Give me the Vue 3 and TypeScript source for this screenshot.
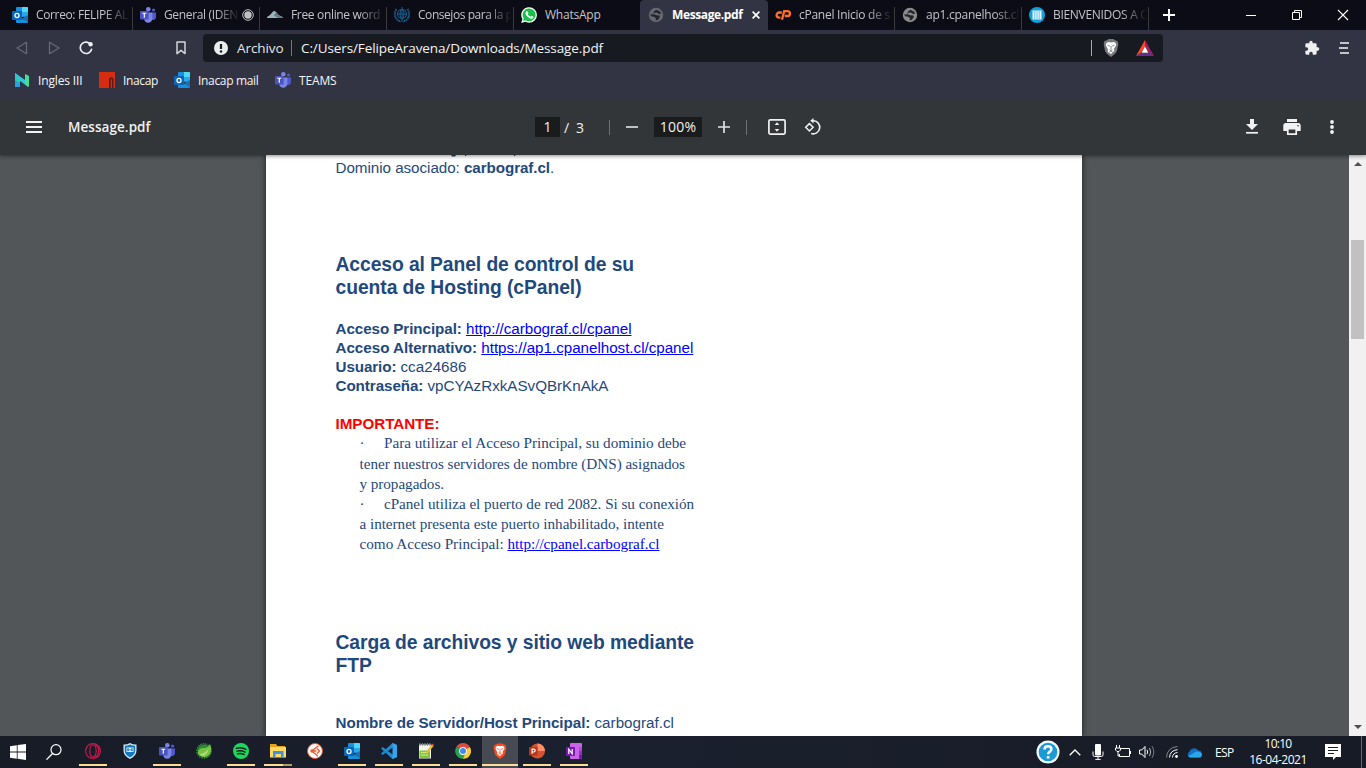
<script setup lang="ts">
interface Run { t: string; w: number; k?: string }
interface Line { cls: string; runs: Run[] }

// Spreads the letters of a run so that its advance equals the given width.
const vFit = {
  mounted(el: HTMLElement, binding: { value: number }) {
    const n = (el.textContent || '').length
    const natural = el.getBoundingClientRect().width
    if (n && binding.value) el.style.letterSpacing = (binding.value - natural) / n + 'px'
  },
}

const tabs = [
  { icon: 'outlook', title: 'Correo: FELIPE AL', w: 92 },
  { icon: 'teams', title: 'General (IDEN', w: 74, rec: true },
  { icon: 'cloudhat', title: 'Free online word', w: 89 },
  { icon: 'who', title: 'Consejos para la p', w: 94.5 },
  { icon: 'whatsapp', title: 'WhatsApp', w: 55.5, plain: true },
  { icon: 'globe', title: 'Message.pdf', w: 70.5, active: true },
  { icon: 'cpanel', title: 'cPanel Inicio de s', w: 91 },
  { icon: 'globe', title: 'ap1.cpanelhost.cl', w: 93 },
  { icon: 'columns', title: 'BIENVENIDOS A C', w: 94.5 },
]

const bookmarks = [
  { icon: 'nearpod', title: 'Ingles III', w: 44.5, gap: 16.5 },
  { icon: 'inacap', title: 'Inacap', w: 35, gap: 16 },
  { icon: 'outlook', title: 'Inacap mail', w: 60.5, gap: 16.5 },
  { icon: 'teams', title: 'TEAMS', w: 37.5, gap: 0 },
]

const lines: Line[] = [
  { cls: 'body first', runs: [{ t: 'Dominio asociado: ', w: 128.5 }, { t: 'carbograf.cl', w: 86, k: 'b' }, { t: '.', w: 4 }] },
  { cls: 'head h-a', runs: [{ t: 'Acceso al Panel de control de su', w: 298.5, k: 'b' }] },
  { cls: 'head', runs: [{ t: 'cuenta de Hosting (cPanel)', w: 246, k: 'b' }] },
  { cls: 'body gap-a', runs: [{ t: 'Acceso Principal: ', w: 130.5, k: 'b' }, { t: 'http://carbograf.cl/cpanel', w: 165.5, k: 'a' }] },
  { cls: 'body', runs: [{ t: 'Acceso Alternativo: ', w: 145.8, k: 'b' }, { t: 'https://ap1.cpanelhost.cl/cpanel', w: 212, k: 'a' }] },
  { cls: 'body', runs: [{ t: 'Usuario: ', w: 65, k: 'b' }, { t: 'cca24686', w: 66 }] },
  { cls: 'body', runs: [{ t: 'Contraseña: ', w: 92, k: 'b' }, { t: 'vpCYAzRxkASvQBrKnAkA', w: 181 }] },
  { cls: 'body gap-b', runs: [{ t: 'IMPORTANTE:', w: 104, k: 'b red' }] },
  { cls: 'serif gap-c', runs: [{ t: '·', w: 24.5, k: 'dot' }, { t: 'Para utilizar el Acceso Principal, su dominio debe', w: 302 }] },
  { cls: 'serif gap-d', runs: [{ t: 'tener nuestros servidores de nombre (DNS) asignados', w: 325.5 }] },
  { cls: 'serif', runs: [{ t: 'y propagados.', w: 84.5 }] },
  { cls: 'serif', runs: [{ t: '·', w: 24.5, k: 'dot' }, { t: 'cPanel utiliza el puerto de red 2082. Si su conexión', w: 310 }] },
  { cls: 'serif', runs: [{ t: 'a internet presenta este puerto inhabilitado, intente', w: 304.5 }] },
  { cls: 'serif', runs: [{ t: 'como Acceso Principal: ', w: 148 }, { t: 'http://cpanel.carbograf.cl', w: 152, k: 'a' }] },
  { cls: 'head h-b', runs: [{ t: 'Carga de archivos y sitio web mediante', w: 358.5, k: 'b' }] },
  { cls: 'head', runs: [{ t: 'FTP', w: 36.5, k: 'b' }] },
  { cls: 'body gap-e', runs: [{ t: 'Nombre de Servidor/Host Principal: ', w: 259, k: 'b' }, { t: 'carbograf.cl', w: 79.5 }] },
]

const apps = [
  { icon: 'windows', cls: 'start' }, { icon: 'search', cls: 'find' }, { icon: 'opera', on: true }, { icon: 'shield' },
  { icon: 'teams', on: true }, { icon: 'leaf' }, { icon: 'spotify', on: true },
  { icon: 'explorer', on: true, stack: true }, { icon: 'git' }, { icon: 'outlook', on: true },
  { icon: 'vscode', on: true }, { icon: 'notepad', on: true }, { icon: 'chrome', on: true },
  { icon: 'brave', on: true, active: true }, { icon: 'ppt', on: true }, { icon: 'onenote', on: true },
]
</script>

<template>
  <svg class="sprite" aria-hidden="true">
    <symbol id="outlook" viewBox="0 0 16 16">
      <path d="M5 0h10q1 0 1 1v9H4V1q0-1 1-1z" fill="#1a8fe0" /><path d="M10 0h5q1 0 1 1v4h-6z" fill="#50d9ff" /><path d="M4 4h6v5H4z" fill="#0f6cbd" /><path d="M10 5h6v4h-6z" fill="#28a8ea" />
      <path d="M4 8l6 4 6-4v7q0 1-1 1H5q-1 0-1-1z" fill="#1490df" /><path d="M16 8v7l-6-3z" fill="#1b6fae" />
      <rect y="4" width="10" height="9" rx=".8" fill="#0a66b8" /><ellipse cx="5" cy="8.5" rx="2" ry="2.1" fill="none" stroke="#fff" stroke-width="1.3" />
    </symbol>
    <symbol id="teams" viewBox="0 0 16 16">
      <circle cx="8.3" cy="2.3" r="2.3" fill="#7b83eb" /><circle cx="13.6" cy="3" r="1.6" fill="#5059c9" />
      <path d="M11 5.5h5v4.8a2.6 2.6 0 0 1-3 2.6h-2z" fill="#5059c9" /><path d="M4 5.500h8.400v6a4.200 4.200 0 0 1-8.400 0z" fill="#7b83eb" />
      <rect y="4" width="8.600" height="8.600" rx=".8" fill="#4b53bc" /><path d="M2.300 6.200h4M4.300 6.200v4.500" stroke="#fff" stroke-width="1.150" />
    </symbol>
    <symbol id="cloudhat" viewBox="0 0 16 16"><path d="M0 10l3-2L6 4.500q1.500-1.200 3 .5l2.500 3 4.500 2.300V11H0z" fill="#9fb3bd" /><path d="M9 5l3 3.500 4 2v.5h-5L7 8.500z" fill="#607d8b" /></symbol>
    <symbol id="who" viewBox="0 0 16 16"><g fill="none" stroke="#175f91"><circle cx="8" cy="7" r="4.500" stroke-width="1.200" /><ellipse cx="8" cy="7" rx="2" ry="4.500" /><path d="M3.500 7h9M8 0v15" /><path d="M2.500 2C-1 7 1 13 7 14.500M13.500 2C17 7 15 13 9 14.500" stroke-width="2" stroke-dasharray="1.600 .6" /></g></symbol>
    <symbol id="whatsapp" viewBox="0 0 16 16"><path d="M8.200.2a7.700 7.700 0 0 1 0 15.500q-2 0-3.700-.9L.2 16l1.200-4.100A7.700 7.700 0 0 1 8.200.2z" fill="#f4fff6" /><path d="M8.200 1.500a6.400 6.400 0 1 1-3.500 11.800l-2.700.8.800-2.600A6.400 6.400 0 0 1 8.200 1.500z" fill="#18bf4a" /><path d="M5.500 4.300l1-.1 1 2-.8 1q1 1.900 2.800 2.500l1-1 1.900 1-.1 1q-1.300 1.600-3.700.5-3.400-1.500-4.200-4.700-.1-1.300 1.100-2.200z" fill="#fff" /></symbol>
    <symbol id="globe" viewBox="0 0 16 16"><circle cx="8" cy="8" r="7.200" fill="currentColor" /><path d="M8.500 2.800l3.500 1.700 1.200 2.300-2 .3-2.700-1.600-2 .3-.8 1.400 2.800 1 3 .3.300 1.800-2.200 2.700-2 .5.300-2-1.300-1.500-3.300-.7L2 7.300l2.300.3 1.200-.7.300-2.300z" fill="#24262e" /></symbol>
    <symbol id="cpanel" viewBox="0 0 16 16"><path d="M6.800 5.500H4.200a2.600 2.600 0 0 0 0 5.200h1.200M7 12.800l2.200-8.700h3.300a2.400 2.400 0 0 1 0 4.900H9.800" fill="none" stroke="#ff6c2c" stroke-width="2.300" /></symbol>
    <symbol id="columns" viewBox="0 0 16 16"><circle cx="8" cy="8" r="8" fill="#129fda" /><path d="M3.500 3.500h9v9h-9z" fill="#e8f7ff" /><path d="M5.800 3.500v9M8 3.500v9M10.200 3.500v9" stroke="#49b7e5" stroke-width=".8" /></symbol>
    <symbol id="nearpod" viewBox="0 0 16 16"><path d="M1 1l5 4v10H1z" fill="#25d3a0" /><path d="M1 1l13 9v5L1 5z" fill="#34c5da" /><path d="M11 2l4 2v11l-4-3z" fill="#47df95" /><path d="M1 8l5 3v4H1z" fill="#2a9fe0" /></symbol>
    <symbol id="inacap" viewBox="0 0 16 16"><path d="M0 0h16v16H0z" fill="#d62c10" /><path d="M10 16V7q0-1.500 1.500-1.500H13q1.500 0 1.500 1.500v9h-1.500V7.200h-1.300V16z" fill="#5c1c18" /></symbol>
    <symbol id="lion" viewBox="0 0 16 18"><path d="M4 1.200L5.500 0h5L12 1.200l2.500.8.800 3-1.400 7Q13 14.500 8 18 3 14.500 2.100 12L.7 5l.8-3z" fill="currentColor" /><path d="M3.400 4l2-1 2.600.6 2.600-.6 2 1 .6 2.300-2.300 3.500.5 1.900L8 15l-3.400-2.300.5-1.900L2.800 6.300z" fill="#fff" /><path d="M4.500 6.300l2.300.8M11.500 6.300l-2.300.8M8 7v3.500M6.500 10.700L8 11.500l1.500-.8M6.300 13l1.700-1 1.700 1" fill="none" stroke="currentColor" stroke-width=".9" /></symbol>
    <symbol id="windows" viewBox="0 0 16 16"><path d="M0 2.200l6.800-1v6.300H0zM7.600 1.100L16 0v7.500H7.600zM0 8.400h6.800v6.300L0 13.800zM7.600 8.400H16V16l-8.400-1.200z" fill="#fff" /></symbol>
    <symbol id="search" viewBox="0 0 16 16"><circle cx="10" cy="5.700" r="5" fill="none" stroke="#fff" stroke-width="1.200" /><path d="M6.500 9.500L.5 15.600" stroke="#fff" stroke-width="1.300" /></symbol>
    <symbol id="opera" viewBox="0 0 16 16"><g fill="none" stroke="#c3194b"><circle cx="8" cy="8" r="7.400" stroke-width="1.200" /><ellipse cx="8" cy="8" rx="3.200" ry="6.200" stroke-width="1.200" /><path d="M10 1.600C15 4 15 12 10 14.400" stroke-width="1.200" /></g></symbol>
    <symbol id="shield" viewBox="0 0 16 16"><path d="M8 0q3 1.800 6.500 1.500v6Q14.500 13 8 16 1.500 13 1.500 7.500v-6Q5 1.800 8 0z" fill="#d8edf9" /><path d="M8 1.500q2.500 1.200 5.200 1.200v5q0 4-5.200 6.700Q2.800 11.700 2.800 7.700v-5Q5.500 2.700 8 1.500z" fill="#1476bd" /><path d="M4.500 4.500h7V9h-7z" fill="#eaf7ff" /><path d="M5.300 5.300h1.500v2.900H5.300zM9.200 5.300h1.500v2.900H9.200zM7.300 6.200h1.400v1.200H7.300z" fill="#1476bd" /></symbol>
    <symbol id="leaf" viewBox="0 0 16 16"><circle cx="8" cy="8" r="6.600" fill="#2c8b32" /><circle cx="8" cy="8" r="7.200" fill="none" stroke="#3a9a3b" stroke-width="1.300" stroke-dasharray="1.400 1.100" /><path d="M2 11Q1 5 8 5q4 0 6-4 3 7-1 11-5 5-11-1z" fill="#75c045" /><path d="M3 11q6 0 10-6-2 8-7 8z" fill="#b0dd76" /></symbol>
    <symbol id="spotify" viewBox="0 0 16 16"><circle cx="8" cy="8" r="8" fill="#1ed760" /><path d="M3.300 5.400q5-1.600 9.600 1M3.900 8.200q4.300-1.300 8.200.9M4.400 10.800q3.500-1 6.800.8" fill="none" stroke="#15231d" stroke-width="1.400" stroke-linecap="round" /></symbol>
    <symbol id="explorer" viewBox="0 0 16 16"><path d="M0 1h6l1.500 2H15v3H0z" fill="#e6a31a" /><path d="M0 4h16v10.500H0z" fill="#ffd766" /><path d="M3 8h10.500v6.500H11V11H5.500v3.500H3z" fill="#3b94dc" /></symbol>
    <symbol id="git" viewBox="0 0 16 16"><circle cx="8" cy="8" r="7.500" fill="#fff" stroke="#e9542b" /><path d="M11.500 2.800L4.800 8l6.200 5.200M4.800 8h4.700M10 5.500L12.500 8 10 10.500" fill="none" stroke="#ee5b32" stroke-width="1.400" /><circle cx="5" cy="8" r="1.700" fill="#ee5b32" /></symbol>
    <symbol id="vscode" viewBox="0 0 16 16"><path d="M11.500 0L16 2v12l-4.500 2L0 5.500 1.600 4 12 11.700V4.300L1.600 12 0 10.500z" fill="#1f8ad0" /><path d="M11.500 0L16 2v12l-4.500 2z" fill="#36a4ec" /></symbol>
    <symbol id="notepad" viewBox="0 0 16 16"><path d="M1 1.500h12v14H1z" fill="#f3f5ed" /><path d="M1.500 7.500H12V15H1.500z" fill="#83c534" /><path d="M2 0v3M4.500 0v3M7 0v3M9.500 0v3M12 0v3" stroke="#8d8d8d" /><path d="M3 9.500h7M3 12h7" stroke="#c8ec8d" /><path d="M8 10.500l.6-2.500 5-6.500 2 1.500-5 6.300z" fill="#e9bb3b" /><path d="M13.600 1.500l1-1L16 1.800l-.5 1.200z" fill="#d64b3a" /></symbol>
    <symbol id="chrome" viewBox="0 0 16 16"><path d="M8 8L1.400 4A7.700 7.700 0 0 1 14.800 4z" fill="#dd4b3e" /><path d="M8 8l6.800-4A7.700 7.700 0 0 1 8 15.800z" fill="#fbcd32" /><path d="M8 8L1.400 4A7.700 7.700 0 0 0 8 15.800L11 9z" fill="#2aa04e" /><circle cx="8" cy="8" r="3.900" fill="#f5f5f5" /><circle cx="8" cy="8" r="3" fill="#4688ee" /></symbol>
    <symbol id="brave" viewBox="0 0 16 16"><svg x="1" y="0" width="14" height="16" viewBox="0 0 16 18" color="#fb4a20"><use href="#lion" /></svg></symbol>
    <symbol id="ppt" viewBox="0 0 16 16"><circle cx="8.500" cy="8" r="7.500" fill="#d35230" /><path d="M8.500.5A7.500 7.500 0 0 1 16 8H8.500z" fill="#ff8f6b" /><rect y="4" width="8.600" height="8.600" rx=".8" fill="#b8361b" /><path d="M3.100 10.700V6.100h1.600q1.500 0 1.500 1.400T4.700 9H3.200" fill="none" stroke="#fff" stroke-width="1.200" /></symbol>
    <symbol id="onenote" viewBox="0 0 16 16"><rect x="4" width="12" height="16" rx="1" fill="#ca64ea" /><path d="M13 4h3v4h-3z" fill="#ae4bd5" /><path d="M13 8h3v4h-3z" fill="#9332bf" /><path d="M13 12h3v3q0 1-1 1h-2z" fill="#7719aa" /><rect y="4" width="9" height="9" rx=".8" fill="#7719aa" /><path d="M2.800 11V6.200l3.400 4.600V6" fill="none" stroke="#fff" stroke-width="1.200" /></symbol>
  </svg>

  <div class="screen">
    <div class="tabstrip">
      <div v-for="(t, i) in tabs" :key="i" class="tab" :class="{ active: t.active, nosep: i === 4 || i === 5, narrow: i === 4 }">
        <svg class="ico" :class="{ dim: t.active }"><use :href="'#' + t.icon" /></svg>
        <span class="title" :class="{ plain: t.plain || t.active, short: t.rec }"><span v-fit="t.w">{{ t.title }}</span></span>
        <svg v-if="t.rec" class="rec" viewBox="0 0 12 12"><circle cx="6" cy="6" r="5.300" fill="none" stroke="#bfc0c4" /><circle cx="6" cy="6" r="3.700" fill="#bfc0c4" /></svg>
        <svg v-if="t.active" class="tabx" viewBox="0 0 8 8"><path d="M.6.6l6.800 6.800M7.400.6L.6 7.400" stroke="#fff" stroke-width="1.700" /></svg>
      </div>
      <svg class="plus" viewBox="0 0 12 12"><path d="M6 0v12M0 6h12" stroke="#fff" stroke-width="2" /></svg>
      <div class="winbtns">
        <svg viewBox="0 0 12 12"><path d="M1 6.500h10" stroke="#fff" /></svg>
        <svg viewBox="0 0 12 12"><path d="M1.500 3.500h7v7h-7zM3.500 3.500v-2h7v7h-2" fill="none" stroke="#fff" /></svg>
        <svg viewBox="0 0 12 12"><path d="M1 1l10 10M11 1L1 11" stroke="#fff" stroke-width="1.100" /></svg>
      </div>
    </div>

    <div class="navbar">
      <svg class="n-back" viewBox="0 0 12 14"><path d="M10.500 1.300v11.400L1 7z" fill="none" stroke="#666976" stroke-width="1.300" stroke-linejoin="round" /></svg>
      <svg class="n-fwd" viewBox="0 0 12 14"><path d="M1.500 1.300v11.400L11 7z" fill="none" stroke="#666976" stroke-width="1.300" stroke-linejoin="round" /></svg>
      <svg class="n-reload" viewBox="0 0 14 14"><path d="M10 1.900A5.700 5.700 0 1 0 12.500 8.400" fill="none" stroke="#eee" stroke-width="1.700" stroke-linecap="round" /><circle cx="11.600" cy="3.300" r="2.200" fill="#eee" /></svg>
      <svg class="n-mark" viewBox="0 0 10 14"><path d="M1 1h8v11.600L5 9.300l-4 3.300z" fill="none" stroke="#d4d5d9" stroke-width="1.500" stroke-linejoin="round" /></svg>
      <div class="omnibox">
        <svg class="info" viewBox="0 0 14 14"><circle cx="7" cy="7" r="7" fill="#eceded" /><path d="M7 3v5" stroke="#171a21" stroke-width="2.200" /><circle cx="7" cy="10.500" r="1.200" fill="#171a21" /></svg>
        <span class="scheme"><span v-fit="46.500">Archivo</span></span>
        <i class="vbar" />
        <span class="path"><span v-fit="302">C:/Users/FelipeAravena/Downloads/Message.pdf</span></span>
        <i class="vbar right" />
        <svg class="lion"><use href="#lion" /></svg>
        <svg class="bat" viewBox="0 0 18 16"><path d="M9 0L0 16l4-2 5-7z" fill="#ff4724" /><path d="M9 0l9 16-4-2-5-7z" fill="#9e1f63" /><path d="M0 16h18l-4.500-3h-9z" fill="#662d91" /><path d="M9 6.500l3.500 6.300h-7z" fill="#fff" /></svg>
      </div>
      <svg class="puzzle" viewBox="0 0 24 24"><path d="M20.500 11H19V7a2 2 0 0 0-2-2h-4V3.500a2.500 2.500 0 0 0-5 0V5H4a2 2 0 0 0-2 2v3.800h1.500a2.700 2.700 0 0 1 0 5.400H2V20a2 2 0 0 0 2 2h3.800v-1.500a2.700 2.700 0 0 1 5.400 0V22H17a2 2 0 0 0 2-2v-4h1.500a2.500 2.500 0 0 0 0-5z" fill="#efeff0" /></svg>
      <svg class="burger" viewBox="0 0 10 12"><path d="M1 1h9M0 6h9M1 11h9" stroke="#c4c5ca" stroke-width="2" /></svg>
    </div>

    <div class="bookmarks">
      <div v-for="b in bookmarks" :key="b.title" class="bm" :style="{ marginRight: b.gap + 'px' }">
        <svg class="ico"><use :href="'#' + b.icon" /></svg><span v-fit="b.w">{{ b.title }}</span>
      </div>
    </div>

    <div class="pdfbar">
      <svg class="menu" viewBox="0 0 16 12"><path d="M0 1h16M0 6h16M0 11h16" stroke="#f1f1f1" stroke-width="2" /></svg>
      <span class="name"><span v-fit="82.500">Message.pdf</span></span>
      <span class="box page-no">1</span>
      <span class="slash">/</span><span class="total">3</span>
      <i class="sep s1" />
      <svg class="minus" viewBox="0 0 12 12"><path d="M0 6h12" stroke="#d9dadb" stroke-width="1.700" /></svg>
      <span class="box zoom"><span v-fit="36.500">100%</span></span>
      <svg class="zplus" viewBox="0 0 12 12"><path d="M0 6h12M6 0v12" stroke="#e1e2e2" stroke-width="1.700" /></svg>
      <i class="sep s2" />
      <svg class="fit" viewBox="0 0 18 16"><rect x=".9" y=".9" width="16.200" height="14.200" rx="1.300" fill="none" stroke="#f1f1f1" stroke-width="1.700" /><path d="M9 3.300l2.300 2.800H6.700zM9 12.700l2.300-2.800H6.700z" fill="#f1f1f1" /></svg>
      <svg class="rotate" viewBox="0 0 18 18"><path d="M8 2.700h1.500a6.600 6.600 0 1 1-2.300 12.900" fill="none" stroke="#f1f1f1" stroke-width="1.600" /><path d="M9.500 0v5.600L6.300 2.800z" fill="#f1f1f1" /><path d="M5.400 5.600L9.100 9.300 5.400 13 1.700 9.300z" fill="none" stroke="#f1f1f1" stroke-width="1.500" /></svg>
      <svg class="dl" viewBox="0 0 12 16"><path d="M4 0h4v5h4l-6 6-6-6h4z" fill="#f1f1f1" /><path d="M0 13.800h12" stroke="#f1f1f1" stroke-width="1.700" /></svg>
      <svg class="print" viewBox="0 0 18 16"><path d="M4 0h10v3H4zM3 4h12q2.700 0 2.700 2.700V12H14V9.500H4V12H.3V6.700Q.3 4 3 4z" fill="#f1f1f1" /><path d="M4.800 9.700h8.400v5.400H4.800z" fill="none" stroke="#f1f1f1" stroke-width="1.700" /><circle cx="15" cy="6.800" r=".8" fill="#323639" /></svg>
      <svg class="dots" viewBox="0 0 4 14"><g fill="#f1f1f1"><circle cx="2" cy="2" r="1.900" /><circle cx="2" cy="7" r="1.900" /><circle cx="2" cy="12" r="1.900" /></g></svg>
    </div>

    <div class="viewer">
      <div class="sheet">
        <!-- descenders of the line scrolled under the toolbar -->
        <svg class="tails" viewBox="0 0 200 3"><path d="M115 0h5l-1 1.400h-3zM129 0h1.200v1h-1.200zM178 0h1.200v1h-1.200z" fill="#1f497d" /></svg>
        <div v-for="(l, i) in lines" :key="i" class="line" :class="l.cls">
          <span v-for="(r, j) in l.runs" :key="j" v-fit="r.w" :class="r.k">{{ r.t }}</span>
        </div>
      </div>
      <div class="scroll">
        <svg viewBox="0 0 8 4"><path d="M0 4l4-4 4 4z" fill="#505050" /></svg>
        <div class="thumb" />
        <svg class="down" viewBox="0 0 8 4"><path d="M0 0l4 4 4-4z" fill="#505050" /></svg>
      </div>
    </div>

    <div class="taskbar">
      <div v-for="a in apps" :key="a.icon" class="app" :class="[a.cls, { on: a.on, cur: a.active, stack: a.stack }]">
        <svg class="ico"><use :href="'#' + a.icon" /></svg>
      </div>
      <div class="tray">
        <svg class="help" viewBox="0 0 24 24"><circle cx="12" cy="12" r="11.500" fill="#f3fbff" /><circle cx="12" cy="12" r="9.300" fill="#1b9ad6" /><path d="M8.500 9.500Q8.700 6.200 12 6.200t3.400 3q0 1.500-1.800 2.700-1.400.9-1.400 2.300" fill="none" stroke="#fff" stroke-width="2.500" /><circle cx="12.100" cy="17.200" r="1.500" fill="#fff" /></svg>
        <svg class="chev" viewBox="0 0 12 7"><path d="M.7 6.300L6 1l5.300 5.300" fill="none" stroke="#fff" stroke-width="1.300" /></svg>
        <svg class="mic" viewBox="0 0 12 16"><rect x="3" y="0" width="6" height="11.500" rx="1" fill="#fff" /><path d="M1 7.500v3.300q0 1.700 1.700 1.700h6.600q1.700 0 1.700-1.700V7.500M6 12.500V15M3.300 15.400h5.400" fill="none" stroke="#fff" /></svg>
        <svg class="batt" viewBox="0 0 16 14"><path d="M6 3.500h8.500v8H4.500V9M15.500 6v3M1.500 0v3M4.500 0v3M.5 3h5v2L4 6.500H2L.5 5zM3 6.500v4.500h1.500" fill="none" stroke="#fff" /></svg>
        <svg class="vol" viewBox="0 0 16 14"><path d="M.5 5h2.300L6 1.500v11L2.800 9H.5z" fill="none" stroke="#fff" /><path d="M8 4.800q1.300 2.200 0 4.400" fill="none" stroke="#fff" /><path d="M10.500 3q2.400 4 0 8" fill="none" stroke="#bbb" /><path d="M13 1.200q3.600 5.800 0 11.600" fill="none" stroke="#777b83" /></svg>
        <svg class="wifi" viewBox="0 0 14 14"><circle cx="11.500" cy="11.500" r="1.400" fill="#fff" /><g fill="none" stroke="#fff"><path d="M7.500 12.500q.2-4.500 5-5" /><path d="M4.500 12.500Q5 5.300 12.500 4.700" /><path d="M1.500 12.500Q2 2.500 12.500 1.500" stroke="#80858d" /></g></svg>
        <svg class="cloud" viewBox="0 0 16 11"><path d="M3 10.500A3 3 0 0 1 2.200 5 5 5 0 0 1 11 3.300 4 4 0 0 1 13.500 10.500z" fill="#126fc8" /><path d="M3.500 10.500L1 9.500l8-5 3.500.5a2.900 2.900 0 0 1 .5 5.500z" fill="#28a8ea" /></svg>
        <span class="lang"><span v-fit="18.500">ESP</span></span>
        <div class="clock"><div><span v-fit="27">10:10</span></div><div><span v-fit="57.500">16-04-2021</span></div></div>
        <svg class="note" viewBox="0 0 16 16"><path d="M0 0h16v13h-5l-3 3v-3H0z" fill="#fff" /><path d="M3 3.500h10M3 6.500h10M3 9.500h6" stroke="#171c28" /></svg>
        <i class="peek" />
      </div>
    </div>
  </div>
</template>

<style>
html, body { margin: 0; overflow: hidden; background: #525659; }
</style>

<style scoped>
.sprite { position: absolute; width: 0; height: 0; }
.screen { width: 1366px; height: 768px; display: flex; flex-direction: column; font-family: "Open Sans", "Noto Sans", sans-serif; font-size: 12px; overflow: hidden; }
svg { display: block; flex: none; }
span { white-space: pre; }
.ico { width: 16px; height: 16px; }

.tabstrip { height: 30px; flex: none; background: #0b0c15; display: flex; align-items: center; padding-left: 5px; }
.tab { width: 127px; height: 30px; flex: none; box-sizing: border-box; display: flex; align-items: center; padding-left: 7px; position: relative; color: #c3c4c8; }
.tab:first-child { width: 128px; }
.tab.narrow { width: 126px; }
.tab::after { content: ''; position: absolute; right: 0; top: 7px; bottom: 0; width: 1px; background: #3b3a3b; }
.tab.nosep::after { display: none; }
.tab .ico { color: #8b8b8b; }
.tab .ico.dim { color: #666a70; margin-left: 1px; }
.title { margin-left: 8px; width: 95px; flex: none; line-height: 18px; -webkit-mask-image: linear-gradient(90deg, #000 68px, transparent 94px); mask-image: linear-gradient(90deg, #000 68px, transparent 94px); }
.title.short { width: 75px; -webkit-mask-image: linear-gradient(90deg, #000 52px, transparent 76px); mask-image: linear-gradient(90deg, #000 52px, transparent 76px); }
.title.plain { -webkit-mask-image: none; mask-image: none; width: 71px; }
.tab.active { background: #323443; width: 128px; color: #fff; font-weight: 700; border-radius: 4px 4px 0 0; }
.rec { width: 12px; height: 12px; margin-left: 3px; }
.tabx { width: 8px; height: 8px; margin-left: 9px; }
.plus { width: 12px; height: 12px; margin-left: 14px; }
.winbtns { display: flex; gap: 34px; margin-left: auto; margin-right: 17px; }
.winbtns svg { width: 12px; height: 12px; }

.navbar { height: 35px; flex: none; background: #323443; display: flex; align-items: center; }
.n-back { width: 12px; height: 14px; margin-left: 16px; }
.n-fwd { width: 12px; height: 14px; margin-left: 20px; }
.n-reload { width: 14px; height: 14px; margin-left: 19px; }
.n-mark { width: 10px; height: 14px; margin-left: 83px; }
.omnibox { margin-left: 17px; width: 960px; height: 28px; background: #171a21; border-radius: 4px; display: flex; align-items: center; color: #f4f4f5; font-size: 13.500px; }
.info { width: 14px; height: 14px; margin-left: 11px; }
.scheme { margin-left: 9px; width: 47px; color: #e7e7e8; }
.vbar { width: 1px; height: 16px; background: #75777c; margin-left: 7px; }
.vbar.right { margin-left: auto; background: #a5a6a9; }
.path { margin-left: 9px; }
.lion { width: 16px; height: 18px; color: #797a7d; margin-left: 11px; }
.bat { width: 18px; height: 16px; margin-left: 17px; margin-right: 9px; }
.puzzle { width: 16px; height: 16px; margin-left: 141px; }
.burger { width: 10px; height: 12px; margin-left: 19px; }

.bookmarks { height: 34px; flex: none; background: #323443; display: flex; align-items: flex-start; padding-left: 14px; color: #f6f6f7; }
.bm { display: flex; align-items: center; gap: 8px; height: 30px; }

.pdfbar { height: 56px; flex: none; background: #323639; display: flex; align-items: center; color: #f1f1f1; font-size: 14px; position: relative; z-index: 2; box-shadow: 0 0 4px rgba(0, 0, 0, .45), 0 2px 4px rgba(0, 0, 0, .15); clip-path: inset(0 0 -10px 0); }
.menu { width: 16px; height: 12px; margin-left: 26px; }
.name { margin-left: 26px; width: 83px; font-weight: 600; font-size: 13.500px; }
.box { background: #191b1c; height: 20px; line-height: 20px; text-align: center; }
.page-no { width: 25px; margin-left: 384px; }
.slash { margin-left: 4px; width: 6px; }
.total { margin-left: 2px; width: 8px; padding-left: 4px; }
.sep { width: 1px; height: 15px; background: #6e7173; }
.s1 { margin-left: 25px; }
.minus { width: 12px; height: 12px; margin-left: 16px; }
.zoom { width: 48px; margin-left: 16px; }
.zplus { width: 12px; height: 12px; margin-left: 16px; }
.s2 { margin-left: 16px; }
.fit { width: 18px; height: 16px; margin-left: 21px; }
.rotate { width: 18px; height: 18px; margin-left: 18px; }
.dl { width: 12px; height: 16px; margin-left: auto; }
.print { width: 18px; height: 16px; margin-left: 25px; }
.dots { width: 4px; height: 14px; margin-left: 29px; margin-right: 32px; }

.viewer { height: 581px; flex: none; background: #525659; display: flex; overflow: hidden; }
.sheet { width: 746.500px; margin-left: 266px; padding: 0 0 0 69.500px; background: #fff; box-shadow: 0 0 5px 1px rgba(0, 0, 0, .5); color: #1f497d; }
.tails { width: 200px; height: 3px; }
.line { display: flex; white-space: pre; }
.body { font: 15.200px/19px "Liberation Sans", Arial, sans-serif; }
.head { font: 19.300px/23px "Liberation Sans", Arial, sans-serif; }
.serif { font: 15.200px/20px "Liberation Serif", "Times New Roman", serif; padding-left: 24px; }
.b { font-weight: 700; }
.a { color: #00f; text-decoration: underline; }
.red { color: #f00; }
.h-a { margin-top: 76px; }
.h-b { margin-top: 77px; }
.gap-a { margin-top: 20px; }
.gap-b { margin-top: 19px; }
.gap-c { margin-top: 0; }
.gap-d { margin-top: 1px; }
.gap-e { margin-top: 36px; }

.scroll { width: 17px; margin-left: auto; background: #f1f1f1; display: flex; flex-direction: column; align-items: center; }
.scroll svg { width: 8px; height: 4px; margin-top: 7px; }
.thumb { width: 13px; height: 99px; background: #c1c1c1; margin-top: 74px; }
.scroll .down { margin-top: auto; margin-bottom: 7px; }

.taskbar { height: 32px; flex: none; background: linear-gradient(90deg, #171c27, #1a202d 45%, #171b26); display: flex; }
.app { width: 37px; height: 32px; display: flex; align-items: center; justify-content: center; position: relative; padding: 0 0 2px 1px; box-sizing: border-box; }
.app.start { padding: 0 1px 0 0; }
.app.find { padding: 0 3px 0 0; }
.app.on::after { content: ''; position: absolute; left: 5px; right: 4px; bottom: 2px; height: 2px; background: #fddc93; }
.app.stack::after { background: linear-gradient(90deg, #fddc93 19px, #b09c70 19px); }
.app.cur { background: linear-gradient(#454a53, #454a53) 1px 0 / 36px 32px no-repeat; }
.app.cur::after { left: 1px; right: 0; }
.tray { margin-left: auto; display: flex; align-items: center; color: #fff; }
.help { width: 24px; height: 24px; }
.chev { width: 12px; height: 7px; margin-left: 9px; }
.mic { width: 12px; height: 16px; margin-left: 11px; }
.batt { width: 16px; height: 14px; margin-left: 11px; }
.vol { width: 16px; height: 14px; margin-left: 8px; }
.wifi { width: 14px; height: 14px; margin-left: 10px; }
.cloud { width: 16px; height: 11px; margin-left: 8px; }
.lang { margin-left: 12px; width: 19px; }
.clock { width: 60px; margin-left: 14px; text-align: center; line-height: 16px; }
.note { width: 16px; height: 16px; margin-left: 17px; }
.peek { width: 1px; height: 32px; background: #646973; margin-left: 20px; margin-right: 4px; }
</style>
